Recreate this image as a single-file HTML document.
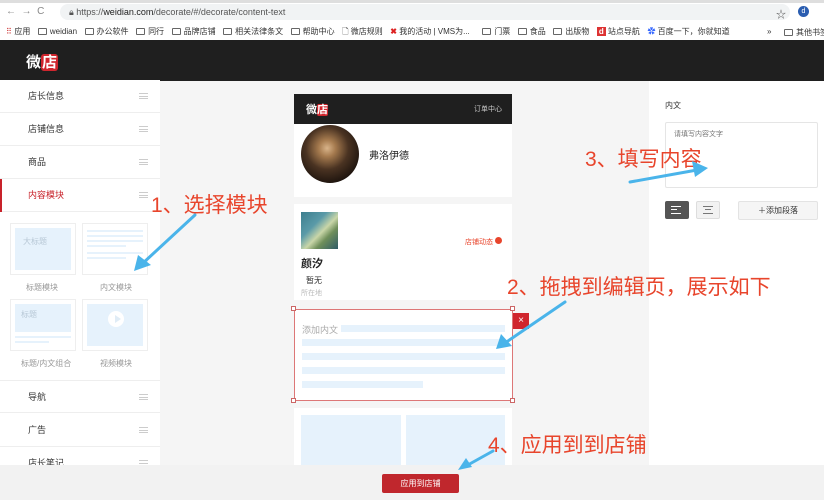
<!DOCTYPE html>
<html><head><meta charset="utf-8"><style>
*{margin:0;padding:0;box-sizing:border-box}
body{width:824px;height:500px;overflow:hidden;position:relative;background:#f5f5f5;font-family:"Liberation Sans","Noto Sans CJK SC",sans-serif;font-size:9px;color:#333}
.a{position:absolute}
.nav{left:0;width:160px;height:33px;background:#fff;border-bottom:1px solid #eee;font-size:9px;line-height:32px;padding-left:28px;color:#333}
.nav i{position:absolute;right:12px;top:13px;width:9px;height:6px;border-top:1px solid #ccc;border-bottom:1px solid #ccc}
.nav i:after{content:"";position:absolute;left:0;right:0;top:2px;border-top:1px solid #ccc}
.ann{color:#e8452c;font-size:21px;white-space:nowrap}
.bm{color:#333;font-size:8px;white-space:nowrap}
.fold{display:inline-block;width:9px;height:7px;border:1px solid #666;border-radius:1px;margin-right:3px;vertical-align:-1px}
.ln{background:#e6f2fc;height:7px}
</style></head><body>
<div class="a" style="left:0;top:0;width:824px;height:40px;background:#fff"></div>
<div class="a" style="left:0;top:0;width:824px;height:3px;background:#dedede"></div>
<div class="a" style="left:6px;top:6px;color:#888;font-size:10px">←&nbsp;&nbsp;→&nbsp;&nbsp;C</div>
<div class="a" style="left:60px;top:4px;width:730px;height:16px;background:#f1f3f4;border-radius:8px"></div>
<div class="a" style="left:69px;top:7px;font-size:9px;color:#555">🔒︎ https://<b style="color:#222;font-weight:normal">weidian.com</b>/decorate/#/decorate/content-text</div>
<div class="a" style="left:776px;top:6px;color:#555;font-size:10px">☆</div>
<div class="a" style="left:798px;top:6px;width:11px;height:11px;border-radius:50%;background:#2a5db0;color:#fff;font-size:7px;text-align:center;line-height:11px">d</div>
<div class="a" style="left:0;top:22px;width:824px;height:18px;padding-left:6px;line-height:18px" >
<span class="bm" style="color:#c33">⠿</span> <span class="bm">应用</span>&nbsp;&nbsp;&nbsp;<span class="bm"><i class="fold"></i>weidian</span>&nbsp;&nbsp;&nbsp;<span class="bm"><i class="fold"></i>办公软件</span>&nbsp;&nbsp;&nbsp;<span class="bm"><i class="fold"></i>同行</span>&nbsp;&nbsp;&nbsp;<span class="bm"><i class="fold"></i>品牌店铺</span>&nbsp;&nbsp;&nbsp;<span class="bm"><i class="fold"></i>相关法律条文</span>&nbsp;&nbsp;&nbsp;<span class="bm"><i class="fold"></i>帮助中心</span>&nbsp;&nbsp;&nbsp;<span class="bm">🗋 微店规则</span>&nbsp;&nbsp;&nbsp;<span class="bm"><b style="color:#d22">✖</b> 我的活动 | VMS为...</span>&nbsp;&nbsp;&nbsp;&nbsp;&nbsp;<span class="bm"><i class="fold"></i>门票</span>&nbsp;&nbsp;&nbsp;<span class="bm"><i class="fold"></i>食品</span>&nbsp;&nbsp;&nbsp;<span class="bm"><i class="fold"></i>出版物</span>&nbsp;&nbsp;&nbsp;<span class="bm"><b style="background:#d33;color:#fff;padding:0 2px">d</b> 站点导航</span>&nbsp;&nbsp;&nbsp;<span class="bm"><b style="color:#36f">✿</b> 百度一下，你就知道</span></div>
<div class="a bm" style="left:767px;top:27px">»</div>
<div class="a bm" style="left:784px;top:27px"><i class="fold"></i>其他书签</div>
<div class="a" style="left:0;top:40px;width:824px;height:41px;background:#1f1f1f"></div>
<div class="a" style="left:26px;top:51px;color:#fff;font-size:15px;font-weight:bold">微<span style="background:#d0262e;border-radius:3px;padding:0 1px">店</span></div>
<div class="a" style="left:0;top:81px;width:160px;height:384px;background:#fff"></div>
<div class="a nav" style="top:80px">店长信息<i></i></div>
<div class="a nav" style="top:113px">店铺信息<i></i></div>
<div class="a nav" style="top:146px">商品<i></i></div>
<div class="a nav" style="top:179px;color:#c8222a">内容模块<i></i></div>
<div class="a" style="left:0;top:179px;width:2px;height:33px;background:#c8222a"></div>
<div class="a" style="left:10px;top:223px;width:66px;height:52px;border:1px solid #eee;padding:4px"><div style="background:#e6f2fc;height:42px;color:#b8c8d6;padding:8px 8px;font-size:8px">大标题</div></div>
<div class="a" style="left:82px;top:223px;width:66px;height:52px;border:1px solid #eee;padding:6px 4px">
<div class="ln" style="height:2px;margin-bottom:3px"></div><div class="ln" style="height:2px;margin-bottom:3px"></div><div class="ln" style="height:2px;margin-bottom:3px"></div><div class="ln" style="height:2px;margin-bottom:3px;width:70%"></div><div class="ln" style="height:2px;margin:5px 0 3px"></div><div class="ln" style="height:2px;width:70%"></div></div>
<div class="a" style="left:26px;top:282px;color:#999;font-size:8px">标题模块</div>
<div class="a" style="left:100px;top:282px;color:#999;font-size:8px">内文模块</div>
<div class="a" style="left:10px;top:299px;width:66px;height:52px;border:1px solid #eee;padding:4px"><div style="background:#e6f2fc;height:28px;color:#b8c8d6;padding:5px 6px;font-size:8px">标题</div><div class="ln" style="height:2px;margin-top:4px"></div><div class="ln" style="height:2px;margin-top:3px;width:60%"></div></div>
<div class="a" style="left:82px;top:299px;width:66px;height:52px;border:1px solid #eee;padding:4px"><div style="background:#e6f2fc;height:42px;position:relative"><div style="position:absolute;left:21px;top:7px;width:16px;height:16px;border-radius:50%;background:#fff"></div><div style="position:absolute;left:28px;top:11px;border-left:6px solid #e0ecf6;border-top:4px solid transparent;border-bottom:4px solid transparent"></div></div></div>
<div class="a" style="left:21px;top:358px;color:#999;font-size:8px">标题/内文组合</div>
<div class="a" style="left:100px;top:358px;color:#999;font-size:8px">视频模块</div>
<div class="a nav" style="top:380px;border-top:1px solid #eee">导航<i></i></div>
<div class="a nav" style="top:414px">广告<i></i></div>
<div class="a nav" style="top:447px">店长笔记<i></i></div>
<div class="a" style="left:649px;top:81px;width:175px;height:384px;background:#fff"></div>
<div class="a" style="left:665px;top:100px;font-size:8px;color:#333">内文</div>
<div class="a" style="left:665px;top:122px;width:153px;height:66px;border:1px solid #e5e5e5;border-radius:2px;padding:6px 8px;font-size:7px;color:#777">请填写内容文字</div>
<div class="a" style="left:665px;top:201px;width:24px;height:18px;background:#555;border-radius:2px"><div style="margin:5px 6px;width:10px;border-top:1px solid #fff;height:8px;border-bottom:1px solid #fff;position:relative"><div style="position:absolute;top:2px;width:6px;border-top:1px solid #fff"></div></div></div>
<div class="a" style="left:696px;top:201px;width:24px;height:18px;background:#f2f2f2;border:1px solid #ddd;border-radius:2px"><div style="margin:4px 6px;width:10px;border-top:1px solid #777;height:8px;border-bottom:1px solid #777;position:relative"><div style="position:absolute;top:2px;left:2px;width:6px;border-top:1px solid #777"></div></div></div>
<div class="a" style="left:738px;top:201px;width:80px;height:19px;background:#f5f5f5;border:1px solid #e3e3e3;border-radius:2px;text-align:center;line-height:17px;font-size:8px;color:#333">＋添加段落</div>
<div class="a" style="left:294px;top:94px;width:218px;height:30px;background:#1f1f1f"></div>
<div class="a" style="left:306px;top:101px;color:#fff;font-size:11px;font-weight:bold">微<span style="background:#d0262e;border-radius:2px">店</span></div>
<div class="a" style="left:474px;top:104px;color:#ccc;font-size:7px">订单中心</div>
<div class="a" style="left:294px;top:124px;width:218px;height:73px;background:#fff"></div>
<div class="a" style="left:301px;top:125px;width:58px;height:58px;border-radius:50%;background:radial-gradient(circle at 45% 40%,#d9b48a 0,#a57a4e 18%,#4a3322 45%,#1e140e 75%)"></div>
<div class="a" style="left:369px;top:147px;font-size:10px;color:#222">弗洛伊德</div>
<div class="a" style="left:294px;top:204px;width:218px;height:96px;background:#fff"></div>
<div class="a" style="left:301px;top:212px;width:37px;height:37px;background:linear-gradient(135deg,#3c7e8e 0,#5a9aa8 35%,#c9d6a8 55%,#6f8f5a 70%,#2e5a66 100%)"></div>
<div class="a" style="left:465px;top:237px;color:#e8452c;font-size:7px">店铺动态 <span style="display:inline-block;width:7px;height:7px;border-radius:50%;background:#e8452c"></span></div>
<div class="a" style="left:301px;top:255px;font-size:11px;font-weight:bold;color:#222">颜汐</div>
<div class="a" style="left:306px;top:275px;font-size:8px;color:#333">暂无</div>
<div class="a" style="left:301px;top:288px;font-size:7px;color:#bbb">所在地</div>
<div class="a" style="left:294px;top:309px;width:219px;height:92px;background:#fff;border:1px solid #d77"></div>
<div class="a" style="left:302px;top:323px;font-size:9px;color:#aaa">添加内文</div>
<div class="a ln" style="left:341px;top:325px;width:164px"></div>
<div class="a ln" style="left:302px;top:339px;width:203px"></div>
<div class="a ln" style="left:302px;top:353px;width:203px"></div>
<div class="a ln" style="left:302px;top:367px;width:203px"></div>
<div class="a ln" style="left:302px;top:381px;width:121px"></div>
<div class="a" style="left:291px;top:306px;width:5px;height:5px;border:1px solid #c66;background:#fff"></div>
<div class="a" style="left:510px;top:306px;width:5px;height:5px;border:1px solid #c66;background:#fff"></div>
<div class="a" style="left:291px;top:398px;width:5px;height:5px;border:1px solid #c66;background:#fff"></div>
<div class="a" style="left:510px;top:398px;width:5px;height:5px;border:1px solid #c66;background:#fff"></div>
<div class="a" style="left:513px;top:313px;width:16px;height:16px;background:#d0262e;color:#fff;text-align:center;line-height:16px;font-size:10px">×</div>
<div class="a" style="left:294px;top:408px;width:218px;height:60px;background:#fff"></div>
<div class="a" style="left:301px;top:415px;width:100px;height:52px;background:#e6f2fc"></div>
<div class="a" style="left:406px;top:415px;width:99px;height:52px;background:#e6f2fc"></div>
<div class="a" style="left:0;top:465px;width:824px;height:35px;background:#f2f2f2"></div>
<div class="a" style="left:382px;top:474px;width:77px;height:19px;background:#c0272d;border-radius:2px;color:#fff;font-size:8px;text-align:center;line-height:19px">应用到店铺</div>
<div class="a ann" style="left:151px;top:189px">1、选择模块</div>
<div class="a ann" style="left:507px;top:271px">2、拖拽到编辑页，展示如下</div>
<div class="a ann" style="left:585px;top:143px">3、填写内容</div>
<div class="a ann" style="left:488px;top:429px">4、应用到到店铺</div>
<svg class="a" style="left:0;top:0" width="824" height="500">
<g stroke="#4ab4ea" stroke-width="3" fill="#4ab4ea" stroke-linecap="round">
<line x1="195" y1="215" x2="142" y2="264"/><polygon points="134,271 138,255 151,265" stroke="none"/>
<line x1="565" y1="302" x2="505" y2="343"/><polygon points="496,349 501,334 512,346" stroke="none"/>
<line x1="630" y1="182" x2="697" y2="170"/><polygon points="708,168 692,161 695,177" stroke="none"/>
<line x1="493" y1="451" x2="466" y2="466"/><polygon points="458,470 466,458 472,467" stroke="none"/>
</g></svg>
</body></html>
